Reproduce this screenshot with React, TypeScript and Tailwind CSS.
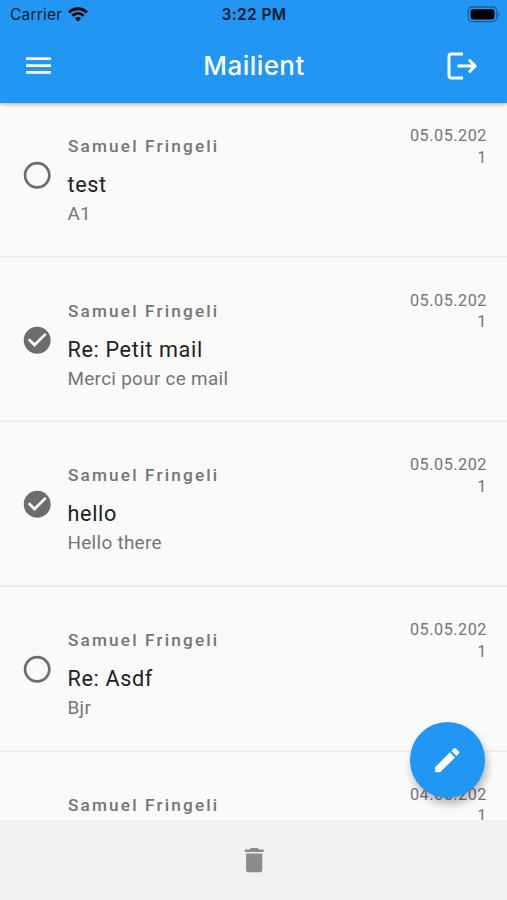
import { useState } from 'react';

interface Mail {
  id: number;
  sender: string;
  subject: string;
  preview: string;
  date: string;
  selected: boolean;
}

const initialMails: Mail[] = [
  { id: 1, sender: 'Samuel Fringeli', subject: 'test', preview: 'A1', date: '05.05.2021', selected: false },
  { id: 2, sender: 'Samuel Fringeli', subject: 'Re: Petit mail', preview: 'Merci pour ce mail', date: '05.05.2021', selected: true },
  { id: 3, sender: 'Samuel Fringeli', subject: 'hello', preview: 'Hello there', date: '05.05.2021', selected: true },
  { id: 4, sender: 'Samuel Fringeli', subject: 'Re: Asdf', preview: 'Bjr', date: '05.05.2021', selected: false },
  { id: 5, sender: 'Samuel Fringeli', subject: '', preview: '', date: '04.05.2021', selected: false },
];

function StatusBar() {
  return (
    <div className="flex h-[30px] items-center justify-between pl-[10px] pr-[7px] font-['Inter',sans-serif] text-[#06182b]">
      <div className="flex w-[150px] items-center gap-[6px]">
        <span className="text-[15.5px] tracking-[0.2px]">Carrier</span>
        <svg className="mb-[2px] h-[15px] w-[20px]" viewBox="0 0 21 15" fill="none" stroke="#000" strokeWidth="3">
          <path d="M1.2 5.3a13.3 13.3 0 0 1 18.6 0" />
          <path d="M4.6 8.8a8.4 8.4 0 0 1 11.8 0" />
          <path d="M10.5 14.8 7.3 11.6a4.6 4.6 0 0 1 6.4 0Z" fill="#000" stroke="none" />
        </svg>
      </div>
      <span className="text-[15.5px] font-semibold tracking-[0.4px]">3:22 PM</span>
      <div className="flex w-[152px] justify-end">
        <svg className="mb-[2px] h-[17px] w-[33px]" viewBox="0 0 33 17">
          <rect x="1.2" y="1" width="28.6" height="14.6" rx="4.3" fill="none" stroke="#145d99" strokeWidth="1.3" />
          <rect x="3.5" y="3.2" width="24" height="10.2" rx="2.4" fill="#000" />
          <path d="M31.5 6v4.6c1.6-.6 1.6-4 0-4.6Z" fill="#145d99" />
        </svg>
      </div>
    </div>
  );
}

function Header() {
  return (
    <header className="relative z-10 h-[103.4px] shrink-0 bg-[#2196f3] shadow-[0_1px_4px_rgba(0,0,0,0.35)]">
      <StatusBar />
      <div className="flex h-[71px] items-center justify-between pl-[22px] pr-[29px] text-white">
        <button aria-label="Menu" className="w-[33px]">
          <svg className="h-[33px] w-[33px]" viewBox="0 0 24 24" fill="currentColor">
            <path d="M3 18h18v-2H3v2zm0-5h18v-2H3v2zm0-7v2h18V6H3z" />
          </svg>
        </button>
        <h1 className="pl-[6px] font-['Inter',sans-serif] text-[26px] font-medium tracking-[0.45px]">Mailient</h1>
        <button aria-label="Log out">
          <svg className="h-[28px] w-[31px]" viewBox="0 0 31 28" fill="none" stroke="currentColor" strokeWidth="3">
            <path d="M16 2H4.5Q2 2 2 4.5v19Q2 26 4.5 26H16" />
            <path d="M10.5 14H28M22 7.8 28.2 14 22 20.2" strokeLinejoin="round" />
          </svg>
        </button>
      </div>
    </header>
  );
}

function SelectIcon({ selected }: { selected: boolean }) {
  return (
    <svg className="h-[32.4px] w-[32.4px]" viewBox="0 0 24 24" fill="currentColor">
      {selected ? (
        <path d="M12 2C6.48 2 2 6.48 2 12s4.48 10 10 10 10-4.48 10-10S17.52 2 12 2zm-2 15l-5-5 1.41-1.41L10 14.17l7.59-7.59L19 8l-9 9z" />
      ) : (
        <path d="M12 2C6.48 2 2 6.48 2 12s4.48 10 10 10 10-4.48 10-10S17.52 2 12 2zm0 18c-4.42 0-8-3.58-8-8s3.58-8 8-8 8 3.58 8 8-3.58 8-8 8z" />
      )}
    </svg>
  );
}

function MailRow({ mail, onToggle }: { mail: Mail; onToggle: () => void }) {
  return (
    <li className="flex h-[164.6px] shrink-0 border-b-2 border-[#eeeeee] pl-[21px] pr-[20px] text-[#757575]">
      <button onClick={onToggle} aria-label="Select" className="mt-[65.7px] h-[33px] w-[33px] text-[#6c6c6c]">
        <SelectIcon selected={mail.selected} />
      </button>
      <div className="ml-[13.5px] flex-1 pt-[42px]">
        <p className="pl-[0.5px] text-[17.2px] leading-[22px] font-medium tracking-[2.15px]">{mail.sender}</p>
        <p className="mt-[13px] text-[21.6px] leading-[30px] tracking-[0.65px] text-[#212121]">{mail.subject}</p>
        <p className="mt-px text-[18.9px] leading-[26px] tracking-[0.3px]">{mail.preview}</p>
      </div>
      <p className="mt-[32px] w-[78px] text-right text-[16.2px] leading-[21.6px] tracking-[0.54px] break-all">
        {mail.date}
      </p>
    </li>
  );
}

export default function App() {
  const [mails, setMails] = useState(initialMails);

  const toggle = (id: number) => {
    setMails(mails.map((m) => (m.id === id ? { ...m, selected: !m.selected } : m)));
  };

  return (
    <div className="relative flex h-[900px] w-[507px] flex-col overflow-hidden bg-[#fafafa] font-['Roboto',sans-serif]">
      <Header />

      <main className="min-h-0 flex-1 overflow-hidden">
        <ul className="-mt-[10.2px] flex flex-col">
          {mails.map((mail) => (
            <MailRow key={mail.id} mail={mail} onToggle={() => toggle(mail.id)} />
          ))}
        </ul>
      </main>

      {/* Compose */}
      <button
        aria-label="Compose"
        className="absolute right-[21.7px] bottom-[102px] flex h-[75.7px] w-[75.7px] items-center justify-center rounded-full bg-[#2196f3] text-white shadow-[2px_6px_9px_rgba(0,0,0,0.28)]"
      >
        <svg className="h-[32.4px] w-[32.4px]" viewBox="0 0 24 24" fill="currentColor">
          <path d="M3 17.25V21h3.75L17.81 9.94l-3.75-3.75L3 17.25zM20.71 7.04c.39-.39.39-1.02 0-1.41l-2.34-2.34c-.39-.39-1.02-.39-1.41 0l-1.83 1.83 3.75 3.75 1.83-1.83z" />
        </svg>
      </button>

      <footer className="flex h-[80px] shrink-0 items-center justify-center bg-[#f2f0f1]">
        <button aria-label="Delete" className="pl-px text-[#8b8b8b]">
          <svg className="h-[32.4px] w-[32.4px]" viewBox="0 0 24 24" fill="currentColor">
            <path d="M6 19c0 1.1.9 2 2 2h8c1.1 0 2-.9 2-2V7H6v12zM19 4h-3.5l-1-1h-5l-1 1H5v2h14V4z" />
          </svg>
        </button>
      </footer>
    </div>
  );
}
